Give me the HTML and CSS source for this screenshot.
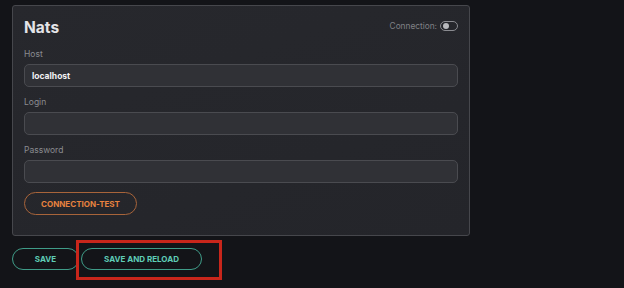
FILE: index.html
```html
<!DOCTYPE html>
<html>
<head>
<meta charset="utf-8">
<link rel="stylesheet" href="styles.css">
</head>
<body>
<div class="page">
  <section class="card">
    <header class="card-head">
      <h1 class="title">Nats</h1>
      <div class="conn">
        <span class="conn-label">Connection:</span>
        <span class="toggle"><span class="knob"></span></span>
      </div>
    </header>
    <label class="field-label">Host</label>
    <div class="input"><span class="input-value">localhost</span></div>
    <label class="field-label">Login</label>
    <div class="input"></div>
    <label class="field-label">Password</label>
    <div class="input"></div>
    <button class="btn btn-orange">CONNECTION-TEST</button>
  </section>
  <div class="actions">
    <button class="btn btn-teal btn-save">SAVE</button>
    <button class="btn btn-teal btn-reload">SAVE AND RELOAD</button>
    <div class="highlight"></div>
  </div>
</div>
</body>
</html>
```

FILE: styles.css
```css
* { box-sizing: border-box; }
html, body { margin: 0; padding: 0; }
body {
  background: #131418;
  font-family: Inter, "Noto Sans", sans-serif;
  width: 624px;
  height: 288px;
  overflow: hidden;
}
.page {
  padding: 5px 12px 0 12px;
}
.card {
  width: 458px;
  height: 231px;
  background: linear-gradient(160deg, #27282d 0%, #24252a 100%);
  border: 1px solid #46474c;
  border-radius: 3px;
  padding: 10px 11px 0 11px;
  display: flex;
  flex-direction: column;
  align-items: stretch;
}
.card-head {
  display: flex;
  justify-content: space-between;
  align-items: flex-start;
  height: 22px;
}
.title {
  margin: 2px 0 0 0;
  font-size: 15.5px;
  line-height: 20px;
  font-weight: 700;
  color: #e3e4e7;
}
.conn {
  display: flex;
  align-items: center;
  gap: 3px;
  margin-top: 5px;
}
.conn-label {
  font-size: 8.3px;
  color: #808186;
  line-height: 10px;
}
.toggle {
  width: 18px;
  height: 10px;
  border: 1px solid #8a8b90;
  border-radius: 6px;
  display: flex;
  align-items: center;
  padding-left: 2px;
}
.knob {
  width: 6px;
  height: 6px;
  border-radius: 50%;
  background: #b8b9bd;
}
.field-label {
  display: block;
  font-size: 8.5px;
  line-height: 12px;
  color: #8a8b90;
  margin-top: 10px;
}
.input {
  margin-top: 4px;
  height: 23px;
  background: #303136;
  border: 1px solid #4a4b50;
  border-radius: 5px;
  padding-left: 7px;
  display: flex;
  align-items: center;
}
.input + .field-label { margin-top: 9px; }
.input-value {
  color: #f2f2f4;
  font-weight: 700;
  font-size: 8.5px;
}
.btn {
  font-family: Inter, "Noto Sans", sans-serif;
  font-weight: 700;
  font-size: 8px;
  background: transparent;
  border-radius: 12px;
  height: 23px;
  padding: 0;
  cursor: pointer;
}
.btn-orange {
  align-self: flex-start;
  margin-top: 9px;
  width: 113px;
  border: 1px solid #a8643a;
  color: #e8823f;
}
.actions {
  position: relative;
  display: flex;
  gap: 2px;
  margin-top: 12px;
}
.btn-teal {
  border: 1px solid #3f9c88;
  color: #5fcdb6;
  height: 22px;
}
.btn-save { width: 67px; }
.btn-reload { width: 121px; }
.highlight {
  position: absolute;
  left: 64px;
  top: -8px;
  width: 146px;
  height: 40px;
  border: 3px solid #c8261b;
}
```
